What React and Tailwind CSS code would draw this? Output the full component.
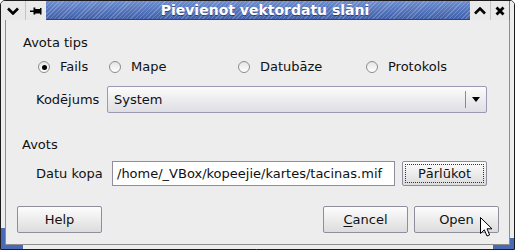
import React from 'react';

const Radio = ({ checked }) => (
  <span className="w-[12px] h-[12px] rounded-full border border-[#8c8c8c] bg-[linear-gradient(#e4e4e4,#ffffff)] flex items-center justify-center shrink-0">
    {checked && <span className="w-[5px] h-[5px] rounded-full bg-black" />}
  </span>
);

const Button = ({ className = '', children }) => (
  <div
    className={`h-[27px] w-[85px] border border-[#8e8e9c] rounded-[2px] bg-[linear-gradient(#fdfdfd,#dcdcdc)] flex items-center justify-center ${className}`}
  >
    {children}
  </div>
);

const TitleButton = ({ className = '', children }) => (
  <div className={`h-full bg-[#e9e9e9] flex items-center justify-center ${className}`}>{children}</div>
);

export default function App() {
  return (
    <div className="w-[515px] h-[250px] bg-[#ededed] flex flex-col border border-[#1c1c1c] rounded-t-[5px] overflow-hidden relative font-['DejaVu_Sans',sans-serif] text-[13px] leading-[16px] text-[#111]">
      {/* title bar */}
      <div className="h-[19px] flex shrink-0">
        <TitleButton className="w-[25px] border-r border-[#c4c4c4]">
          <svg width="12" height="8" viewBox="0 0 12 8">
            <path d="M1 1.5 L6 6.5 L11 1.5" fill="none" stroke="#000" strokeWidth="2.6" />
          </svg>
        </TitleButton>
        <TitleButton className="w-[20px]">
          <svg width="12" height="8" viewBox="0 0 12 8">
            <rect x="0" y="3.5" width="4" height="1.5" fill="#000" />
            <rect x="3.5" y="0.5" width="1.8" height="7" fill="#000" />
            <rect x="5" y="2" width="5" height="4.5" fill="#000" />
            <rect x="10" y="1" width="1.5" height="6.5" fill="#000" />
          </svg>
        </TitleButton>
        <div className="flex-1 pl-[14px] border-b border-[#2c4380] bg-[image:repeating-linear-gradient(135deg,rgba(255,255,255,0.2)_0px,rgba(255,255,255,0.2)_1px,transparent_1px,transparent_3px),linear-gradient(#6d8dd0,#3f5fa9)] flex items-center justify-center">
          <span className="text-white font-bold text-[14px] leading-[16px] [text-shadow:0_1px_0_rgba(0,0,40,0.45)]">
            Pievienot vektordatu slāni
          </span>
        </div>
        <TitleButton className="w-[20px]">
          <svg width="12" height="8" viewBox="0 0 12 8">
            <path d="M1 6.5 L6 1.5 L11 6.5" fill="none" stroke="#000" strokeWidth="2.6" />
          </svg>
        </TitleButton>
        <TitleButton className="w-[19px] border-l border-[#c4c4c4]">
          <svg width="10" height="10" viewBox="0 0 10 10">
            <path d="M1.5 1.5 L8.5 8.5 M8.5 1.5 L1.5 8.5" fill="none" stroke="#000" strokeWidth="2.8" />
          </svg>
        </TitleButton>
        <div className="w-[5px] bg-[#ededed] border-l border-[#7a7a7a]" />
      </div>

      {/* body */}
      <div className="flex-1 px-[4px] pb-[4px] flex">
        <div className="flex-1 border-x border-b border-[#8e8e8e] flex flex-col">
          <div className="mt-[15px] ml-[17px]">Avota tips</div>

          <div className="mt-[8px] ml-[32px] flex items-center h-[16px]">
            <div className="w-[71px] flex items-center gap-[10px]">
              <Radio checked />
              <span>Fails</span>
            </div>
            <div className="w-[129px] flex items-center gap-[10px]">
              <Radio />
              <span>Mape</span>
            </div>
            <div className="w-[128px] flex items-center gap-[10px]">
              <Radio />
              <span>Datubāze</span>
            </div>
            <div className="flex items-center gap-[10px]">
              <Radio />
              <span>Protokols</span>
            </div>
          </div>

          <div className="mt-[11px] ml-[30px] flex items-center">
            <span className="w-[71px]">Kodējums</span>
            <div className="w-[380px] h-[27px] border border-[#9a9ab2] rounded-[2px] bg-[linear-gradient(#fcfcfc,#dedee4)] flex items-center">
              <span className="flex-1 pl-[6px]">System</span>
              <div className="w-px h-[17px] bg-[#8a8a8a]" />
              <div className="w-[20px] flex items-center justify-center">
                <svg width="8" height="5" viewBox="0 0 8 5">
                  <path d="M0 0 L8 0 L4 5 Z" fill="#000" />
                </svg>
              </div>
            </div>
          </div>

          <div className="mt-[24px] ml-[16px]">Avots</div>

          <div className="mt-[8px] ml-[30px] flex items-center">
            <span className="w-[76px]">Datu kopa</span>
            <div className="w-[283px] h-[25px] bg-white border border-[#8e8e9c] flex items-center pl-[4px]">
              /home/_VBox/kopeejie/kartes/tacinas.mif
            </div>
            <div className="ml-[7px] w-[85px] h-[25px] border border-[#8e8e9c] rounded-[2px] bg-[linear-gradient(#fdfdfd,#dcdcdc)] p-[2px] flex">
              <div className="flex-1 border border-dotted border-[#333] flex items-center justify-center">
                Pārlūkot
              </div>
            </div>
          </div>

          <div className="mt-[20px] ml-[11px] mr-[10px] flex items-center">
            <Button>Help</Button>
            <div className="flex-1" />
            <Button>
              <span>
                <span className="underline underline-offset-2">C</span>ancel
              </span>
            </Button>
            <Button className="ml-[6px]">Open</Button>
          </div>
        </div>
      </div>

      {/* resize corners */}
      <div className="absolute left-0 bottom-0 w-[4px] h-[21px] bg-[#4a69b4]" />
      <div className="absolute left-0 bottom-0 w-[22px] h-[4px] bg-[#4a69b4]" />
      <div className="absolute right-0 bottom-0 w-[4px] h-[11px] bg-[#4a69b4]" />
      <div className="absolute right-0 bottom-0 w-[21px] h-[4px] bg-[#4a69b4]" />

      {/* mouse pointer */}
      <svg className="absolute left-[479px] top-[216px]" width="13" height="21" viewBox="0 0 13 21">
        <path
          d="M0.5 0.5 L0.5 16.5 L4.3 12.8 L7 19 L9.6 17.9 L7 11.8 L12 11.8 Z"
          fill="#fff"
          stroke="#000"
          strokeWidth="1"
          strokeLinejoin="miter"
        />
      </svg>
    </div>
  );
}
